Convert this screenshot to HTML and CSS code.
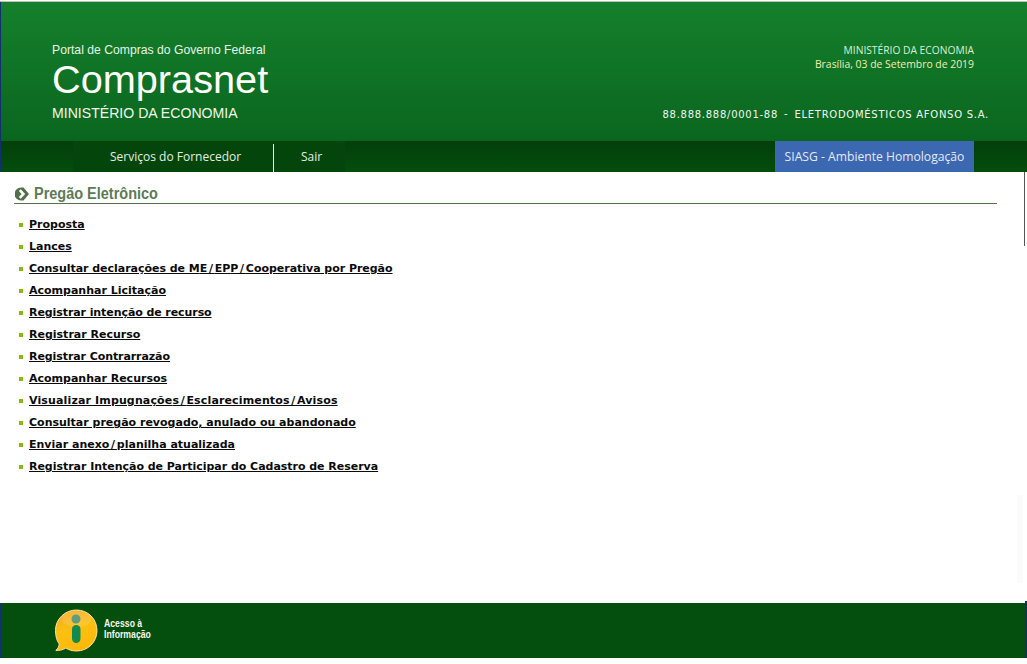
FILE: index.html
```html
<!DOCTYPE html>
<html lang="pt-BR">
<head>
<meta charset="utf-8">
<title>Comprasnet</title>
<link rel="stylesheet" href="styles.css">
</head>
<body>
<div class="page">
  <header class="banner">
    <div class="brand">
      <div class="portal">Portal de Compras do Governo Federal</div>
      <div class="logo">Comprasnet</div>
      <div class="ministry">MINISTÉRIO DA ECONOMIA</div>
    </div>
    <div class="info">
      <div class="info-top">
        <div>MINISTÉRIO DA ECONOMIA</div>
        <div class="date">Brasília, 03 de Setembro de 2019</div>
      </div>
      <div class="company"><span>88.888.888/0001-88</span><span class="dash">-</span><span>ELETRODOMÉSTICOS AFONSO S.A.</span></div>
    </div>
  </header>
  <nav class="nav">
    <div class="menu">
      <a class="menu-item first">Serviços do Fornecedor</a>
      <a class="menu-item second">Sair</a>
    </div>
    <div class="env">SIASG - Ambiente Homologação</div>
  </nav>
  <main class="content">
    <h1 class="title">
      <svg class="title-icon" width="14" height="14" viewBox="0 0 14 14"><path d="M6 .5h2.500L14 7l-5.500 6.500H6A6.500 6.500 0 0 1 6 .5z" fill="#4f7049"/><path d="M4.800 3.200L8.400 7l-3.600 3.800" fill="none" stroke="#fff" stroke-width="2.600"/></svg>
      <span class="title-text">Pregão Eletrônico</span>
    </h1>
    <ul class="list">
      <li><a href="#">Proposta</a></li>
      <li><a href="#">Lances</a></li>
      <li><a class="tight" href="#">Consultar declarações de M<span class="sl">E/</span>EP<span class="sl">P/</span>Cooperativa por Pregão</a></li>
      <li><a href="#">Acompanhar Licitação</a></li>
      <li><a class="tighter" href="#">Registrar intenção de recurso</a></li>
      <li><a href="#">Registrar Recurso</a></li>
      <li><a class="tighter" href="#">Registrar Contrarrazão</a></li>
      <li><a href="#">Acompanhar Recursos</a></li>
      <li><a class="wide" href="#">Visualizar Impugnaçõe<span class="sl">s/</span>Esclarecimento<span class="sl">s/</span>Avisos</a></li>
      <li><a href="#">Consultar pregão revogado, anulado ou abandonado</a></li>
      <li><a href="#">Enviar anex<span class="sl">o/</span>planilha atualizada</a></li>
      <li><a class="tight" href="#">Registrar Intenção de Participar do Cadastro de Reserva</a></li>
    </ul>
  </main>
  <footer class="footer">
    <svg class="ai-icon" width="44" height="44" viewBox="0 0 44 44">
      <defs>
        <linearGradient id="ai" x1="0.3" y1="0" x2="0.6" y2="1">
          <stop offset="0" stop-color="#f5a623"/>
          <stop offset="0.45" stop-color="#fdc010"/>
          <stop offset="1" stop-color="#ffb70a"/>
        </linearGradient>
      </defs>
      <path d="M22.500 1C34 1 43 10 43 21.500S34 42 22.500 42c-4 0-7.600-1-10.700-3-2.500 1.800-6 2.600-10 2.400 2.200-1.800 3.300-4 3.400-6.500C2.800 32 1.500 27 1.500 21.500 1.500 10 11 1 22.500 1z" fill="url(#ai)" stroke="#fde3a0" stroke-width="1"/>
      <ellipse cx="22.500" cy="10" rx="15" ry="8" fill="#ffe39a" opacity="0.22"/>
      <circle cx="22" cy="10" r="4.500" fill="#5f9c80"/>
      <rect x="18" y="16" width="8.500" height="18" rx="4.200" fill="#128a4e"/>
    </svg>
    <div class="ai-text"><div>Acesso à</div><div>Informação</div></div>
  </footer>
</div>
</body>
</html>
```
FILE: styles.css
```css
html, body {
  margin: 0;
  padding: 0;
  background: #fff;
}
.page {
  width: 1027px;
  height: 664px;
  display: flex;
  flex-direction: column;
  overflow: hidden;
}
.banner {
  height: 139px;
  margin-top: 2px;
  box-sizing: border-box;
  border-left: 1px solid #12306f;
  background: linear-gradient(#15802c, #0a661f);
  box-shadow: 0 -1px 0 #b9c4bb;
  display: flex;
  justify-content: space-between;
  color: #fff;
}
.brand {
  padding: 41px 0 0 51px;
  font-family: "Liberation Sans", Arial, sans-serif;
}
.portal {
  font-size: 12.2px;
  line-height: 14px;
  color: #e6f3e6;
}
.logo {
  font-size: 39.7px;
  line-height: 44px;
}
.ministry {
  font-size: 14.1px;
  line-height: 18px;
  margin-top: 3px;
  color: #f0f7e8;
}
.info {
  font-family: "DejaVu Sans", sans-serif;
  display: flex;
  flex-direction: column;
  align-items: flex-end;
}
.info-top {
  font-family: "Open Sans", sans-serif;
  font-size: 10.25px;
  line-height: 14px;
  text-align: right;
  padding: 41px 53px 0 0;
  color: #d9eed9;
}
.date {
  font-size: 10.4px;
  color: #f0eeb8;
}
.company {
  font-size: 10px;
  line-height: 14px;
  letter-spacing: 0.73px;
  margin-top: 37px;
  padding-right: 38px;
  color: #f2f7f2;
  display: flex;
  gap: 6px;
}
.dash {
  position: relative;
  top: -1px;
}
.nav {
  height: 31px;
  box-sizing: border-box;
  border-left: 1px solid #12306f;
  background: linear-gradient(#033f0a, #044d0d);
  display: flex;
  justify-content: space-between;
  font-family: "Open Sans", sans-serif;
  font-size: 12px;
  color: #e3eee3;
}
.menu {
  display: flex;
  margin-left: 72px;
  background: #03450b;
  height: 31px;
}
.menu-item {
  display: flex;
  align-items: center;
  box-sizing: border-box;
  padding-bottom: 1px;
}
.first {
  width: 201px;
  padding-left: 37px;
  border-right: 1px solid #e8f0e8;
  margin-top: 3px;
  height: 28px;
  padding-bottom: 4px;
}
.second {
  width: 71px;
  padding-left: 27px;
}
.env {
  width: 199px;
  margin-right: 53px;
  background: #3c67b1;
  color: #e4eaf6;
  display: flex;
  align-items: center;
  justify-content: center;
  font-size: 12.15px;
}
.content {
  flex: 1;
  min-height: 0;
  padding: 13px 30px 0 14px;
  position: relative;
}
.content::after {
  content: "";
  position: absolute;
  top: 0;
  right: 2px;
  width: 1px;
  height: 74px;
  background: #555;
}
.content::before {
  content: "";
  position: absolute;
  top: 323px;
  right: 4px;
  width: 6px;
  height: 88px;
  background: #fbfbfb;
}
.title {
  margin: 0;
  height: 18px;
  border-bottom: 1px solid #54704e;
  display: flex;
  align-items: center;
  gap: 5px;
  padding-left: 1px;
  font-family: "Liberation Sans", Arial, sans-serif;
  font-weight: bold;
  font-size: 16px;
  color: #5d7a57;
}
.title-text {
  transform: scaleX(0.905);
  transform-origin: left center;
}
.list {
  list-style: none;
  margin: 10px 0 0;
  padding: 0 0 0 5px;
  font-family: "DejaVu Sans", Verdana, sans-serif;
  font-size: 11px;
  font-weight: bold;
}
.list li {
  height: 22px;
  line-height: 22px;
  display: flex;
  align-items: center;
  gap: 6px;
}
.list li::before {
  content: "";
  width: 4px;
  height: 4px;
  background: #8ab80f;
  flex: none;
}
.list a {
  color: #0b0b0b;
  text-decoration: underline;
  text-decoration-thickness: 1px;
}
.list a.tight {
  letter-spacing: -0.03px;
}
.list a.tighter {
  letter-spacing: -0.08px;
}
.list a.wide {
  letter-spacing: 0.14px;
}
.list a .sl {
  letter-spacing: 1.75px;
}
.footer {
  height: 55px;
  box-sizing: border-box;
  flex: none;
  margin-bottom: 6px;
  border-left: 1px solid #12306f;
  border-right: 2px solid #12306f;
  background: #044f0d;
  display: flex;
  align-items: center;
  padding-left: 53px;
  gap: 6px;
  position: relative;
}
.footer::after {
  content: "";
  position: absolute;
  top: -2px;
  right: -2px;
  width: 2px;
  height: 2px;
  background: #12306f;
}
.ai-text {
  font-family: "Liberation Sans", Arial, sans-serif;
  font-weight: bold;
  font-size: 10px;
  line-height: 11px;
  color: #f2f7f2;
  margin-bottom: 3px;
  transform: scaleX(0.87);
  transform-origin: left center;
}
```
